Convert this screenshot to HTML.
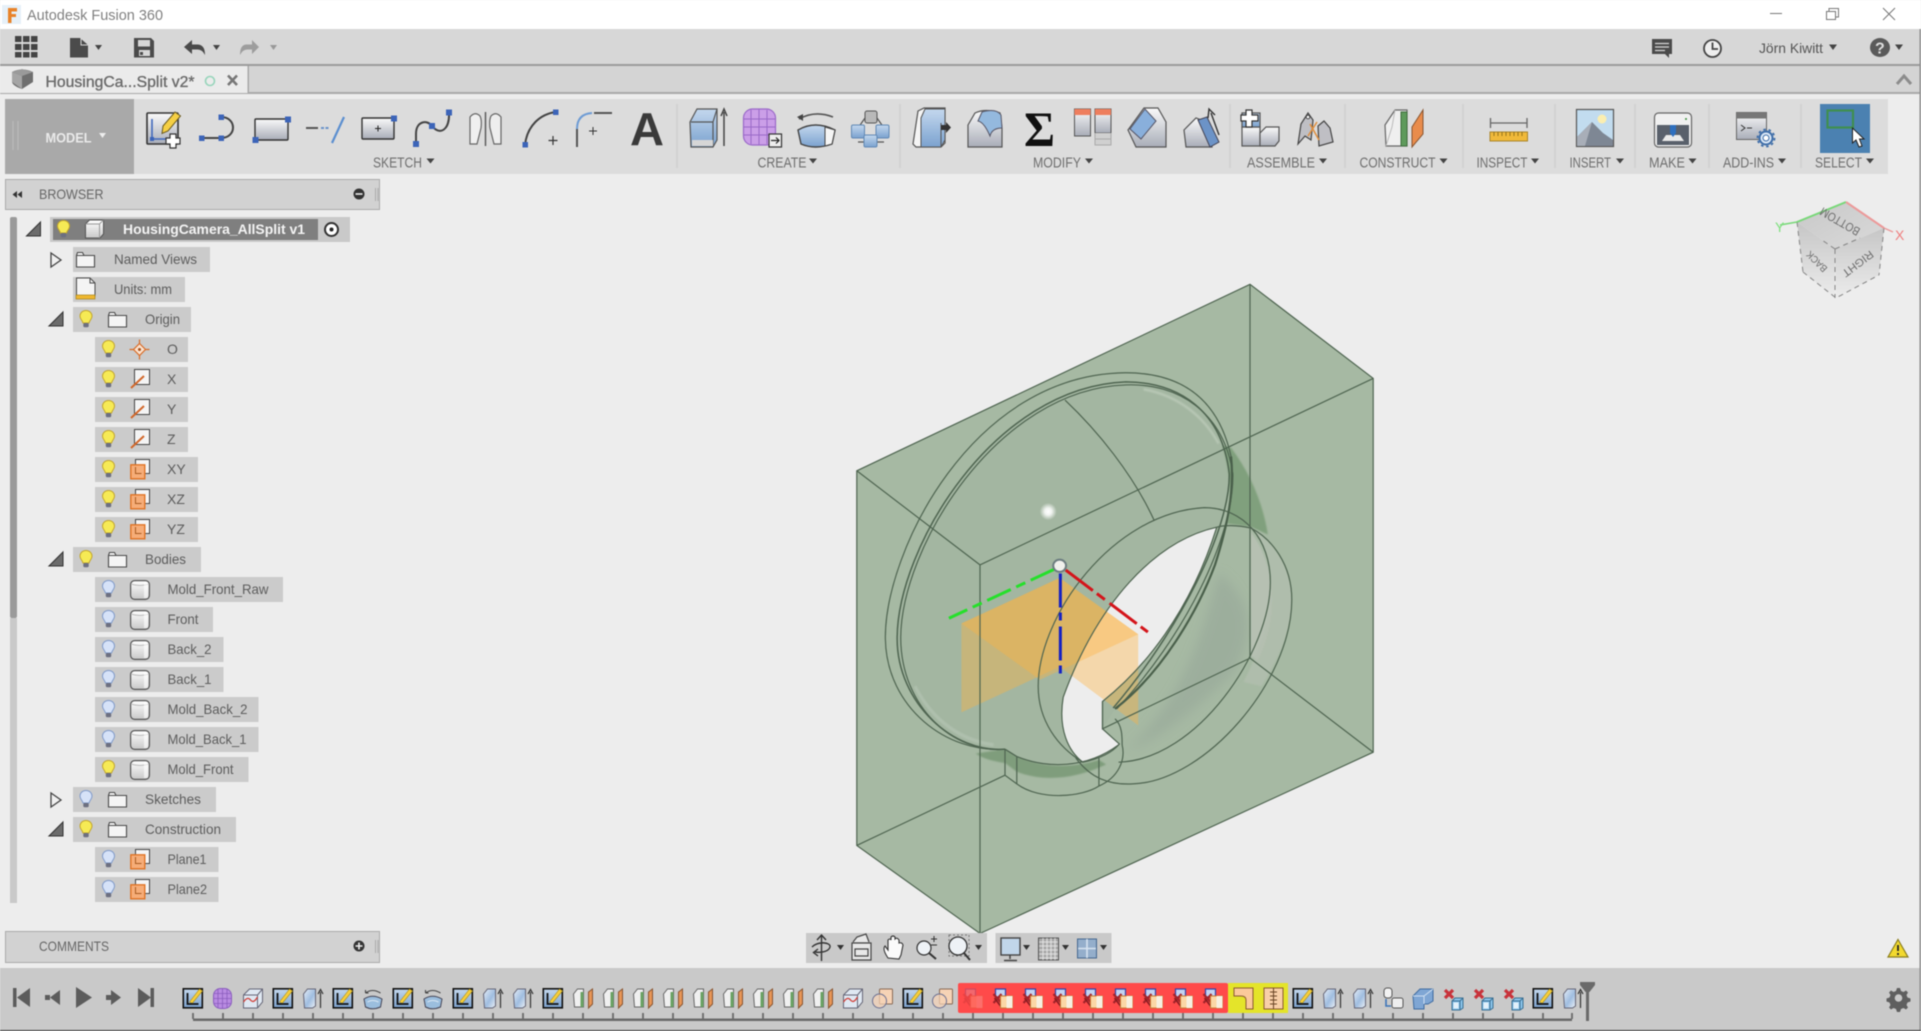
<!DOCTYPE html>
<html><head><meta charset="utf-8"><title>Autodesk Fusion 360</title>
<style>html,body{margin:0;padding:0;background:#ededed;overflow:hidden}svg{display:block;filter:blur(.5px)}text{font-family:"Liberation Sans",sans-serif}</style></head>
<body>
<svg xmlns="http://www.w3.org/2000/svg" width="1921" height="1031" viewBox="0 0 1921 1031">
<defs>
<linearGradient id="gw" x1="0" y1="0" x2="0" y2="1"><stop offset="0" stop-color="#fafafa"/><stop offset="1" stop-color="#a9adb8"/></linearGradient>
<linearGradient id="gb" x1="0" y1="0" x2="0" y2="1"><stop offset="0" stop-color="#c4d8ee"/><stop offset="1" stop-color="#7ba2cf"/></linearGradient>
<linearGradient id="gs" x1="0" y1="0" x2="1" y2="1"><stop offset="0" stop-color="#e8eff8"/><stop offset=".55" stop-color="#9fbde0"/><stop offset="1" stop-color="#edf1f6"/></linearGradient>
<linearGradient id="gy" x1="0" y1="0" x2="0" y2="1"><stop offset="0" stop-color="#ffffff"/><stop offset="1" stop-color="#c8c8c8"/></linearGradient>
<linearGradient id="gc" x1="0" y1="0" x2="1" y2="1"><stop offset="0" stop-color="#c8c8c8"/><stop offset="1" stop-color="#dadada"/></linearGradient>
<linearGradient id="gd" x1="0" y1="0" x2="0" y2="1"><stop offset="0" stop-color="#c6c6c6"/><stop offset="1" stop-color="#ececec"/></linearGradient>
<radialGradient id="spot"><stop offset="0" stop-color="#fff"/><stop offset=".4" stop-color="#fff" stop-opacity=".85"/><stop offset="1" stop-color="#fff" stop-opacity="0"/></radialGradient>
<filter id="b2" x="-20%" y="-20%" width="140%" height="140%"><feGaussianBlur stdDeviation="2"/></filter>
<filter id="b8" x="-40%" y="-40%" width="180%" height="180%"><feGaussianBlur stdDeviation="14"/></filter>

<g id="by"><path d="M6.5 .5C3 .5 .5 3 .5 6.300c0 2.700 2.200 3.800 3 6.700h6c.8-2.900 3-4 3-6.700C12.500 3 10 .5 6.500 .5z" fill="#f6ea55" stroke="#c2a52c"/><rect x="3.800" y="13" width="5.400" height="4.200" rx="1.200" fill="#6c6f80"/></g>
<g id="bb"><path d="M6.500 .5C3 .5 .5 3 .5 6.300c0 2.700 2.200 3.800 3 6.700h6c.8-2.900 3-4 3-6.700C12.500 3 10 .5 6.500 .5z" fill="#d6e2f8" stroke="#7f9aca"/><rect x="3.800" y="13" width="5.400" height="4.200" rx="1.200" fill="#6c6f80"/></g>
<path id="fo" d="M.5 3.500V15h18V3.500H8L6.500 .5H1.500z M.5 3.500H8" fill="#f4f4f4" stroke="#4a4a4a" stroke-width="1.100"/>
<g id="bd"><rect x=".6" y=".6" width="18.800" height="18.800" rx="4" fill="url(#gy)" stroke="#555" stroke-width="1.200"/><path d="M1 4Q10 7 19 4" fill="none" stroke="#bbb"/><rect x="14" y="2" width="4" height="16" fill="#fff" opacity=".6"/></g>
<g id="ax"><rect x="4.500" y=".5" width="15" height="15" fill="#f4f4f4" stroke="#444"/><path d="M1 19L14 7" stroke="#d2672a" stroke-width="2"/></g>
<g id="pl"><rect x="5.500" y=".5" width="14" height="14" fill="#f4f4f4" stroke="#444"/><rect x=".8" y="5.800" width="14" height="14" fill="#f6ad78" stroke="#e0701f" stroke-width="1.300"/><path d="M5.500 8v6.500h6" fill="none" stroke="#a75a20"/></g>
<path id="tE" d="M0 14L14 0V14z" fill="#6c6c6c" stroke="#333"/>
<path id="tC" d="M1 1L11 8 1 15z" fill="#f0f0f0" stroke="#444" stroke-width="1.300"/>

<g id="tsk"><rect x=".8" y=".8" width="19" height="19" fill="url(#gb)" stroke="#111" stroke-width="1.600"/><path d="M5 5V16H16" fill="none" stroke="#111" stroke-width="1.800"/><path d="M7 14L17 1l3 2L10 15z" fill="#f7cf3c" stroke="#a58a1a" stroke-width=".6"/></g>
<g id="tpu"><rect x="1" y=".5" width="18" height="20" rx="7" fill="#b98be2" stroke="#8a5dbd"/><path d="M1 5.500H19M1 10.500H19M1 15.500H19M5.500 1V20M10 .5V20.500M14.500 1V20" stroke="#8a5dbd" stroke-width=".8"/></g>
<g id="tde"><path d="M1 7L7 1H20V14L15 20H1z" fill="#dfe8f2" stroke="#667"/><path d="M1 7H15V20M15 7L20 1" fill="none" stroke="#667"/><path d="M1 14Q5 8 8 12T15 9" fill="none" stroke="#d2443d" stroke-width="1.300"/></g>
<g id="tex"><path d="M1 6L5 1H13V18L10 20H2z" fill="url(#gs)" stroke="#667"/><path d="M18 20V4M15.500 6L18 1.500 20.500 6" fill="none" stroke="#333" stroke-width="1.200"/></g>
<g id="trv"><path d="M3 5Q10 0 18 5M3 5V2M3 5H6" fill="none" stroke="#444" stroke-width="1.100"/><path d="M1.500 11Q10 5.500 19.500 11L18 19Q10 22.500 3 19z" fill="#9bbede" stroke="#445"/><path d="M5 14Q10 11 16 14" fill="none" stroke="#dbe7f3"/></g>
<g id="tco"><path d="M1 6L5 1H11V19H2z" fill="#f0f0f0" stroke="#666"/><path d="M8 4H11V19H8z" fill="#6aa264"/><path d="M16 4L20 1V16L16 20z" fill="#e89555" stroke="#8a5530"/></g>
<g id="tin"><rect x="7" y="1" width="13" height="15" rx="1" fill="#f6d3b6" stroke="#8a6b55"/><circle cx="7" cy="13" r="7" fill="#f6d3b6" fill-opacity=".7" stroke="#6a6f92"/></g>
<g id="tmv"><path d="M3 1H13V9H3z" fill="#c5d3f0" stroke="#3444a8" stroke-width="1.200"/><path d="M1 6L9 15M9 6L1 15" stroke="#a3232a" stroke-width="2.200"/><path d="M2 10L8 18" stroke="#8a1c22" stroke-width="1.600"/><rect x="8" y="8" width="12" height="12" fill="#fbd7a6" stroke="#c77c36"/><rect x="14" y="8" width="6" height="12" fill="#f7f0e2"/></g>
<g id="txb"><path d="M3 2L11 10M11 2L3 10" stroke="#c8323a" stroke-width="3.200"/><path d="M10 13l3-3h8v10l-3 2h-8z" fill="#8bc4ea" stroke="#3a6f93"/><path d="M10 13h8v9M18 13l3-3" fill="none" stroke="#3a6f93"/><rect x="11.500" y="14.500" width="5" height="6" fill="#e2f1fb"/></g>
</defs>

<!-- base -->
<rect width="1921" height="1031" fill="#ededed"/>
<rect x="0" y="0" width="1921" height="29" fill="#fff"/>
<rect x="0" y="29" width="1921" height="35" fill="#d7d7d7"/>
<rect x="0" y="64" width="1921" height="2.500" fill="#9b9b9b"/>
<rect x="0" y="66" width="1921" height="27" fill="#d4d4d4"/>
<rect x="0" y="92" width="1921" height="2" fill="#a9a9a9"/>
<rect x="0" y="66" width="248" height="27" fill="#ebebeb"/>
<rect x="247.500" y="66" width="1.500" height="27" fill="#a9a9a9"/>
<rect x="1919.500" y="29" width="1.500" height="1002" fill="#8c8c8c"/>

<!-- title bar -->
<rect x="2" y="5" width="19" height="19" fill="#e6f0f8"/>
<path d="M8 8H17V11.500H11.500V14H16V17H11.500V23H8z" fill="#e8832a"/>
<text x="27" y="20" font-size="15" fill="#808080" textLength="136" lengthAdjust="spacingAndGlyphs">Autodesk Fusion 360</text>
<path d="M1770 13.500H1782" stroke="#777" stroke-width="1"/>
<path d="M1826.500 11.500H1835.500V19.500H1826.500zM1829 11.500V8.500H1838.500V17H1835.500" fill="none" stroke="#777"/>
<path d="M1883 8L1895 20M1895 8L1883 20" stroke="#777"/>

<!-- top toolbar -->
<g fill="#444"><rect x="15" y="36" width="6.500" height="6"/><rect x="23" y="36" width="6.500" height="6"/><rect x="31" y="36" width="6.500" height="6"/><rect x="15" y="44" width="6.500" height="6"/><rect x="23" y="44" width="6.500" height="6"/><rect x="31" y="44" width="6.500" height="6"/><rect x="15" y="52" width="6.500" height="5.500"/><rect x="23" y="52" width="6.500" height="5.500"/><rect x="31" y="52" width="6.500" height="5.500"/></g>
<path d="M70 38H80L88 45V57.500H70z" fill="#4b4b4b"/><path d="M81 38V45H88" fill="none" stroke="#d7d7d7"/>
<path d="M95 45H102L98.500 50z" fill="#444"/>
<path d="M134 38H151L154 41V57.500H134z" fill="#4b4b4b"/><rect x="138" y="40" width="12" height="6.500" fill="#d7d7d7"/><rect x="139" y="50" width="11" height="6" fill="#d7d7d7"/><rect x="140" y="52" width="3" height="3" fill="#4b4b4b"/>
<path d="M192 40V44.500H198Q205 45 205 55Q202 49 197 49.500H192V54L184 47z" fill="#4a4a4a"/>
<path d="M213 45H220L216.500 50z" fill="#444"/>
<path d="M252 40V44.500H246Q240 45 240 55Q243 49 248 49.500H252V54L259 47z" fill="#9d9d9d"/>
<path d="M270 45H277L273.500 50z" fill="#999"/>
<path d="M1652 39H1672V54H1669V58L1665 54H1652z" fill="#4a4a4a"/><path d="M1655 43.500H1669M1655 47H1669M1655 50.500H1665" stroke="#d7d7d7" stroke-width="1.200"/>
<circle cx="1712.500" cy="48.500" r="8.500" fill="#eee" stroke="#444" stroke-width="1.800"/><path d="M1712.500 42.500V49H1718" fill="none" stroke="#444" stroke-width="1.800"/>
<text x="1759" y="53" font-size="14" fill="#555" textLength="64" lengthAdjust="spacingAndGlyphs">Jörn Kiwitt</text>
<path d="M1829 44.500H1837L1833 50z" fill="#444"/>
<ellipse cx="1880" cy="47.500" rx="10" ry="9.500" fill="#5a5a5a"/>
<text x="1875" y="53.500" font-size="16" font-weight="bold" fill="#ddd">?</text>
<path d="M1895 44.500H1903L1899 50z" fill="#444"/>

<!-- tab -->
<path d="M12 72Q22 67 33 72V82L22 89Q13 86 12 82z" fill="#6f6f6f"/><path d="M12 72L22 76 33 72 22 69z" fill="#9a9a9a"/><path d="M22 76V89L12 82V72z" fill="#a5a5a5"/>
<text x="45.500" y="87" font-size="15.500" fill="#6b6b6b" stroke="#6b6b6b" stroke-width=".35" textLength="149" lengthAdjust="spacingAndGlyphs">HousingCa...Split v2*</text>
<circle cx="210" cy="81" r="4.500" fill="none" stroke="#97d5bb" stroke-width="1.600"/>
<path d="M228 75.500L237 85M237 75.500L228 85" stroke="#777" stroke-width="2.600"/>
<path d="M1897 84L1904 76 1911 84" fill="none" stroke="#8c8c8c" stroke-width="3"/>

<!-- ribbon -->
<rect x="5" y="99" width="1883" height="75" fill="#dcdcdc"/>
<rect x="5" y="99" width="129" height="75" fill="#a9a9a9"/>
<path d="M13 121V150M18 121V150" stroke="#bdbdbd"/>
<text x="45.500" y="142.500" font-size="14" font-weight="bold" fill="#eaeaea" textLength="46" lengthAdjust="spacingAndGlyphs">MODEL</text>
<path d="M99 133H106L102.500 138z" fill="#eee"/>
<g stroke="#cfcfcf" stroke-width="1.500"><path d="M677 104V168M900 104V168M1230 104V168M1345 104V168M1463 104V168M1555 104V168M1635 104V168M1709 104V168M1801 104V168"/></g>

<g font-size="15" fill="#6e6e6e">
<text x="373" y="167.500" textLength="49" lengthAdjust="spacingAndGlyphs">SKETCH</text>
<text x="757.500" y="167.500" textLength="49" lengthAdjust="spacingAndGlyphs">CREATE</text>
<text x="1033" y="167.500" textLength="48" lengthAdjust="spacingAndGlyphs">MODIFY</text>
<text x="1247" y="167.500" textLength="68" lengthAdjust="spacingAndGlyphs">ASSEMBLE</text>
<text x="1359.500" y="167.500" textLength="76" lengthAdjust="spacingAndGlyphs">CONSTRUCT</text>
<text x="1476.500" y="167.500" textLength="51" lengthAdjust="spacingAndGlyphs">INSPECT</text>
<text x="1569.500" y="167.500" textLength="41.500" lengthAdjust="spacingAndGlyphs">INSERT</text>
<text x="1649" y="167.500" textLength="36" lengthAdjust="spacingAndGlyphs">MAKE</text>
<text x="1723" y="167.500" textLength="51" lengthAdjust="spacingAndGlyphs">ADD-INS</text>
<text x="1815" y="167.500" textLength="47" lengthAdjust="spacingAndGlyphs">SELECT</text>
</g>
<g fill="#444"><path d="M426.500 158.500H434.500L430.500 163.500zM809 158.500H817L813 163.500zM1085 158.500H1093L1089 163.500zM1319 158.500H1327L1323 163.500zM1439.500 158.500H1447.500L1443.500 163.500zM1531 158.500H1539L1535 163.500zM1616 158.500H1624L1620 163.500zM1688.500 158.500H1696.500L1692.500 163.500zM1778 158.500H1786L1782 163.500zM1866 158.500H1874L1870 163.500z"/></g>

<!-- sketch icons -->
<rect x="147" y="113" width="31" height="31" rx="1" fill="url(#gw)" stroke="#333" stroke-width="1.600"/>
<path d="M152 119V139H166" fill="none" stroke="#4169bd" stroke-width="1.600"/><rect x="150" y="137" width="4" height="4" fill="#3c64b8"/>
<path d="M163 126L175 112l5.500 4L168 131l-6 2.500z" fill="#f5cf44" stroke="#6a5a20"/>
<path d="M170 134h6v4h4v6h-4v4h-6v-4h-4v-6h4z" fill="#fff" stroke="#333" stroke-width="1.200"/>
<path d="M202 138H221C237 138 237 117 221 117" fill="none" stroke="#444" stroke-width="2"/>
<g fill="#3c64b8"><rect x="199" y="135.500" width="5.500" height="5.500"/><rect x="218.500" y="135.500" width="5.500" height="5.500"/><rect x="218.500" y="114.500" width="5.500" height="5.500"/></g>
<rect x="255" y="119" width="33" height="21" rx="1" fill="url(#gw)" stroke="#333" stroke-width="1.400"/>
<g fill="#3c64b8"><rect x="252.500" y="137" width="6" height="6"/><rect x="285" y="116.500" width="6" height="6"/></g>
<path d="M306 128H318" stroke="#555" stroke-width="2"/><path d="M321 128H329" stroke="#6b93c8" stroke-width="2" stroke-dasharray="3 1.500"/><path d="M332 143L344 117" stroke="#5b8fd0" stroke-width="2.200"/>
<rect x="362" y="118" width="32" height="21" rx="1" fill="url(#gw)" stroke="#333" stroke-width="1.400"/>
<path d="M375 128.500h6M378 125.500v6" stroke="#222"/><rect x="391" y="115.500" width="6" height="6" fill="#3c64b8"/>
<path d="M416 144V134C416 120 428 120 432 126C440 136 450 130 449 112" fill="none" stroke="#444" stroke-width="2"/>
<g fill="#3c64b8"><rect x="413" y="141" width="6" height="6"/><rect x="429" y="123" width="6" height="6"/><rect x="446" y="109.500" width="6" height="6"/></g>
<path d="M470 117Q475 111 480 116Q482 120 481 128L477 144H470z" fill="#f0f0f0" stroke="#666" stroke-width="1.200"/>
<path d="M485.500 112V146" stroke="#555" stroke-width="1.400"/>
<path d="M501 117Q496 111 491 116Q489 120 490 128L494 144H501z" fill="#eee" stroke="#666" stroke-width="1.200"/>
<path d="M525 145C527 126 540 114 556 112" fill="none" stroke="#444" stroke-width="2"/>
<g fill="#3c64b8"><rect x="522.500" y="142" width="5.500" height="5.500"/><rect x="553" y="109.500" width="5.500" height="5.500"/></g>
<path d="M553 136v9M548.500 140.500h9" stroke="#333" stroke-width="1.200"/>
<path d="M577 147V129" stroke="#555" stroke-width="2"/><path d="M577 129Q577 114 592 113" fill="none" stroke="#6d9bd4" stroke-width="2"/><path d="M594 113H612" stroke="#555" stroke-width="2"/><path d="M593 127v8M589 131h8" stroke="#333"/>
<text x="630" y="145" font-size="46" font-weight="bold" fill="#3a3a3a" textLength="34" lengthAdjust="spacingAndGlyphs">A</text>

<!-- create icons -->
<path d="M690 122L697 109H717V140L713 147H691z" fill="url(#gb)" stroke="#555" stroke-width="1.200"/><path d="M691 122H713V147M713 122L717 109" fill="none" stroke="#555" stroke-width="1.200"/><path d="M692 140H713V146H692z" fill="#d6d6d6"/>
<path d="M724 146V112M721 116L724 109 727 116" fill="none" stroke="#444" stroke-width="1.500"/>
<rect x="743.500" y="109" width="32" height="36" rx="9" fill="#cb9fe8" stroke="#9a69c8" stroke-width="1.200"/>
<path d="M744 119H775M744 127H775M744 135H775M751 110V144M759 109V145M767 110V144" stroke="#9a69c8" stroke-width="1"/>
<rect x="769" y="134" width="12.500" height="13" fill="#eee" stroke="#333" stroke-width="1.200"/><path d="M771 140.500H779M776 137.500L779 140.500 776 143.500" fill="none" stroke="#222" stroke-width="1.200"/>
<path d="M799 119Q815 110 833 117" fill="none" stroke="#555" stroke-width="1.600"/><path d="M797 117L803 114 803 121z" fill="#444"/>
<path d="M798 130Q815 120 835 130L832 144Q815 150 801 144z" fill="url(#gb)" stroke="#444" stroke-width="1.400"/><path d="M825 127L835 130 832 144 825 146z" fill="#f5f5f5" stroke="#444"/>
<rect x="865" y="111" width="12" height="12" rx="2" fill="#b9b9b9" stroke="#555"/>
<path d="M858 128L865 118M884 128L877 118M858 142L865 142M884 142L877 142" stroke="#555" stroke-width="1.200"/>
<rect x="851.500" y="125" width="13" height="13" rx="1.500" fill="url(#gb)" stroke="#6088b4"/>
<rect x="876" y="125" width="13" height="13" rx="1.500" fill="url(#gb)" stroke="#6088b4"/>
<rect x="864" y="135" width="13" height="12" rx="1.500" fill="url(#gb)" stroke="#6088b4"/>

<!-- modify icons -->
<path d="M913 144L918 111 924 108H945V143L941 147H916z" fill="#f4f4f4" stroke="#555" stroke-width="1.200"/><path d="M921 118L925 109H945V140L941 147H921z" fill="url(#gb)" stroke="#555"/><path d="M941 123V147" stroke="#555"/>
<path d="M941 125H946V122L951 127.500 946 133V130H941z" fill="#333"/>
<path d="M968 125L975 113Q985 108 1000 113L1002 128V147H968z" fill="url(#gw)" stroke="#555" stroke-width="1.200"/><path d="M982 112Q996 108 1001 115L1002 128Q992 128 990 136 984 122 978 121z" fill="#94b9de" stroke="#556"/>
<text x="1024" y="146" font-size="50" font-weight="bold" fill="#111" textLength="31" lengthAdjust="spacingAndGlyphs" style="font-family:'Liberation Serif',serif">Σ</text>
<rect x="1074.500" y="109" width="16" height="27" fill="url(#gw)" stroke="#555"/><rect x="1074.500" y="109" width="16" height="6" fill="#ee7e5e"/>
<rect x="1095" y="109" width="16" height="24" fill="url(#gw)" stroke="#555"/><rect x="1095" y="109" width="16" height="6" fill="#ee7e5e"/>
<path d="M1095 133v12h16v-12M1095 139H1111" fill="#d0d0d0" stroke="#aaa"/>
<path d="M1128 130L1144 108H1158L1166 122V147H1136z" fill="url(#gw)" stroke="#555" stroke-width="1.200"/><path d="M1130 129L1145 109 1156 121 1141 139z" fill="#89afdb" stroke="#556"/>
<path d="M1184 130L1196 118 1206 122 1212 147H1186z" fill="url(#gw)" stroke="#555" stroke-width="1.200"/><path d="M1198 120L1207 117 1219 142 1210 147z" fill="#6c93c7" stroke="#445"/>
<path d="M1219 135L1211 113M1208 118L1209 109 1215 115" fill="none" stroke="#333" stroke-width="1.400"/>

<!-- assemble -->
<rect x="1242" y="127" width="18" height="19" fill="url(#gw)" stroke="#555" stroke-width="1.200"/>
<path d="M1260 133L1266 127H1279V141L1275 146H1260z" fill="url(#gw)" stroke="#555" stroke-width="1.200"/>
<path d="M1242 113H1260V127H1242z" fill="url(#gb)" stroke="#555" stroke-width="1.200"/>
<path d="M1246 110h6v5h6v6h-6v6h-6v-6h-5v-6h5z" fill="#fff" stroke="#333" stroke-width="1.200"/>
<path d="M1298 144L1301 124 1308 113 1313 120 1311 140 1305 136z" fill="#bfbfc4" stroke="#444" stroke-width="1.200"/><path d="M1333 142L1330 128 1324 121 1318 126 1319 146z" fill="#bfbfc4" stroke="#444" stroke-width="1.200"/>
<path d="M1310 124L1319 140M1317 122L1308 136" stroke="#e08f3e" stroke-width="1.500"/><circle cx="1308" cy="117" r="1.800" fill="#fff" stroke="#444"/>

<!-- construct -->
<path d="M1385 125L1395 110H1407V146H1386z" fill="#efefef" stroke="#666" stroke-width="1.200"/><path d="M1401 112H1407V146H1401z" fill="#5e9a5b" stroke="#3f6e3d"/><path d="M1395 110L1392 127 1386 146" fill="none" stroke="#bbb"/>
<path d="M1412 127L1423 110V134L1412 147z" fill="#e98c4c" stroke="#8a5530"/>

<!-- inspect -->
<path d="M1490.500 118V128M1527 118V128M1490.500 123H1527" fill="none" stroke="#666" stroke-width="1.300"/>
<rect x="1490" y="132" width="37.500" height="9" fill="#f0b93a" stroke="#a9852b"/><path d="M1494 132v4M1498 132v4M1502 132v4M1506 132v4M1510 132v4M1514 132v4M1518 132v4M1522 132v4" stroke="#7f6416" stroke-width=".8"/>

<!-- insert -->
<rect x="1576.500" y="109.500" width="37" height="37" fill="#c2dcef" stroke="#555" stroke-width="1.200"/><circle cx="1602" cy="119" r="4.500" fill="#fbeeb0"/>
<path d="M1577 146V137L1592 122 1603 133 1613 140V146z" fill="#7e8794"/><path d="M1592 122L1585 146H1577V137z" fill="#a8aeb8"/>

<!-- make -->
<rect x="1654.500" y="113" width="37" height="34" rx="4" fill="#f0f0f0" stroke="#666" stroke-width="1.200"/><rect x="1657" y="125" width="32" height="20" fill="#59606b"/>
<path d="M1662 141H1684L1680 135H1666z" fill="#e9e9e9"/><path d="M1670 125H1676V133L1673 137 1670 133z" fill="#2e6fbe"/><circle cx="1686" cy="119" r="1" fill="#3a8e3a"/>

<!-- add-ins -->
<rect x="1736.500" y="112.500" width="30" height="27" fill="url(#gw)" stroke="#666"/><rect x="1736.500" y="112.500" width="30" height="6" fill="#777"/>
<path d="M1741 125L1745 128 1741 131M1747 128H1752" fill="none" stroke="#333"/>
<circle cx="1766" cy="138" r="6.500" fill="#dce9f7" stroke="#3e6da8" stroke-width="2"/><circle cx="1766" cy="138" r="3" fill="#fff" stroke="#3e6da8"/><circle cx="1766" cy="138" r="8.500" fill="none" stroke="#3e6da8" stroke-width="1.800" stroke-dasharray="2.500 2.800"/>

<!-- select -->
<rect x="1820" y="104" width="50" height="49" fill="#4b81b1"/>
<rect x="1827.500" y="110.500" width="25.500" height="17" fill="none" stroke="#3f8f4f" stroke-width="2.200"/>
<path d="M1852.500 128V143L1856 140 1859 147 1862 146 1859.500 139H1864z" fill="#fff" stroke="#222"/>

<!-- browser panel -->
<rect x="5.500" y="179.500" width="374" height="30" fill="#d2d2d2" stroke="#aaa"/>
<path d="M22 191L17.500 194.500 22 198zM17 191L12.500 194.500 17 198z" fill="#333"/>
<text x="39" y="199" font-size="14" fill="#666" textLength="64.500" lengthAdjust="spacingAndGlyphs">BROWSER</text>
<circle cx="359" cy="194" r="5.500" fill="#333"/><path d="M355.500 194H362.500" stroke="#eee" stroke-width="1.600"/>
<path d="M375.500 188V201M378 188V201" stroke="#aaa"/>

<!-- scrollbar -->
<rect x="10" y="217" width="7" height="401" rx="2" fill="#9a9a9a"/><rect x="10" y="618" width="7" height="285" fill="#c9c9c9"/>

<!-- tree -->
<rect x="50" y="217" width="300" height="25" fill="#c9c9c9"/><rect x="53" y="219" width="265" height="21" fill="#7f7f7f"/>
<use href="#tE" x="26.500" y="222"/>
<use href="#by" x="57" y="220"/>
<path d="M85.500 224L89.500 220H103.500V234L100 238H85.500z" fill="url(#gy)" stroke="#555"/><path d="M85.500 224H99.500L103.500 220M99.500 224V238" fill="none" stroke="#999"/>
<text x="123" y="234" font-size="14" font-weight="bold" fill="#f4f4f4" textLength="182" lengthAdjust="spacingAndGlyphs">HousingCamera_AllSplit v1</text>
<circle cx="331.500" cy="229.500" r="6.500" fill="#fff" stroke="#333" stroke-width="2"/><circle cx="331.500" cy="229.500" r="2" fill="#222"/>

<g fill="#cbcbcb">
<rect x="73" y="247" width="137" height="25"/><rect x="73" y="277" width="112" height="25"/><rect x="73" y="307" width="118" height="25"/>
<rect x="95" y="337" width="93" height="25"/><rect x="95" y="367" width="93" height="25"/><rect x="95" y="397" width="93" height="25"/><rect x="95" y="427" width="93" height="25"/>
<rect x="95" y="457" width="103" height="25"/><rect x="95" y="487" width="103" height="25"/><rect x="95" y="517" width="103" height="25"/>
<rect x="73" y="547" width="128" height="25"/><rect x="95" y="577" width="188" height="25"/><rect x="95" y="607" width="118" height="25"/>
<rect x="95" y="637" width="128.500" height="25"/><rect x="95" y="667" width="128.500" height="25"/><rect x="95" y="697" width="163.500" height="25"/><rect x="95" y="727" width="163.500" height="25"/><rect x="95" y="757" width="153.500" height="25"/>
<rect x="73" y="787" width="143" height="25"/><rect x="73" y="817" width="163" height="25"/><rect x="95" y="847" width="123.500" height="25"/><rect x="95" y="877" width="123.500" height="25"/>
</g>

<use href="#tC" x="50" y="252"/><use href="#fo" x="76" y="252"/>
<path d="M76.500 278V296H95V283L90 278z" fill="#f4f4f4" stroke="#4a4a4a"/><path d="M90 278V283H95" fill="none" stroke="#4a4a4a"/><rect x="76" y="295" width="19" height="4" fill="#efb72e" stroke="#a6841f" stroke-width=".7"/>
<use href="#tE" x="49" y="312"/><use href="#by" x="79.500" y="310"/><use href="#fo" x="108" y="312"/>

<use href="#by" x="102" y="340"/><use href="#by" x="102" y="370"/><use href="#by" x="102" y="400"/><use href="#by" x="102" y="430"/><use href="#by" x="102" y="460"/><use href="#by" x="102" y="490"/><use href="#by" x="102" y="520"/>
<path d="M139.500 343.500L145.500 349.500 139.500 355.500 133.500 349.500z" fill="#fbe3cf" stroke="#d96c27" stroke-width="1.200"/><path d="M139.500 339.500V343.500M139.500 355.500V359.500M129.500 349.500H133.500M145.500 349.500H149.500" stroke="#d96c27" stroke-width="1.200"/><circle cx="139.500" cy="349.500" r="1.500" fill="#a8501c"/>
<use href="#ax" x="130" y="369"/><use href="#ax" x="130" y="399"/><use href="#ax" x="130" y="429"/>
<use href="#pl" x="130" y="459"/><use href="#pl" x="130" y="489"/><use href="#pl" x="130" y="519"/>

<use href="#tE" x="49" y="552"/><use href="#by" x="79.500" y="550"/><use href="#fo" x="108" y="552"/>
<use href="#bb" x="102" y="580"/><use href="#bb" x="102" y="610"/><use href="#bb" x="102" y="640"/><use href="#bb" x="102" y="670"/><use href="#bb" x="102" y="700"/><use href="#bb" x="102" y="730"/><use href="#by" x="102" y="760"/>
<use href="#bd" x="130" y="580"/><use href="#bd" x="130" y="610"/><use href="#bd" x="130" y="640"/><use href="#bd" x="130" y="670"/><use href="#bd" x="130" y="700"/><use href="#bd" x="130" y="730"/><use href="#bd" x="130" y="760"/>
<use href="#tC" x="50" y="792"/><use href="#bb" x="79.500" y="790"/><use href="#fo" x="108" y="792"/>
<use href="#tE" x="49" y="822"/><use href="#by" x="79.500" y="820"/><use href="#fo" x="108" y="822"/>
<use href="#bb" x="102" y="850"/><use href="#bb" x="102" y="880"/><use href="#pl" x="130" y="849"/><use href="#pl" x="130" y="879"/>

<g font-size="14" fill="#5d5d5d">
<text x="114" y="264" textLength="83" lengthAdjust="spacingAndGlyphs">Named Views</text>
<text x="114" y="294" textLength="58" lengthAdjust="spacingAndGlyphs">Units: mm</text>
<text x="145" y="324" textLength="35" lengthAdjust="spacingAndGlyphs">Origin</text>
<text x="167" y="354">O</text><text x="167" y="384">X</text><text x="167" y="414">Y</text><text x="167" y="444">Z</text>
<text x="167" y="474">XY</text><text x="167" y="504">XZ</text><text x="167" y="534">YZ</text>
<text x="145" y="564" textLength="41" lengthAdjust="spacingAndGlyphs">Bodies</text>
<text x="167.500" y="594" textLength="101" lengthAdjust="spacingAndGlyphs">Mold_Front_Raw</text>
<text x="167.500" y="624" textLength="31" lengthAdjust="spacingAndGlyphs">Front</text>
<text x="167.500" y="654" textLength="44" lengthAdjust="spacingAndGlyphs">Back_2</text>
<text x="167.500" y="684" textLength="44" lengthAdjust="spacingAndGlyphs">Back_1</text>
<text x="167.500" y="714" textLength="80" lengthAdjust="spacingAndGlyphs">Mold_Back_2</text>
<text x="167.500" y="744" textLength="79" lengthAdjust="spacingAndGlyphs">Mold_Back_1</text>
<text x="167.500" y="774" textLength="66" lengthAdjust="spacingAndGlyphs">Mold_Front</text>
<text x="145" y="804" textLength="56" lengthAdjust="spacingAndGlyphs">Sketches</text>
<text x="145" y="834" textLength="76" lengthAdjust="spacingAndGlyphs">Construction</text>
<text x="167.500" y="864" textLength="39" lengthAdjust="spacingAndGlyphs">Plane1</text>
<text x="167.500" y="894" textLength="39.500" lengthAdjust="spacingAndGlyphs">Plane2</text>
</g>

<!-- comments -->
<rect x="5.500" y="931.500" width="374" height="31" fill="#d2d2d2" stroke="#aaa"/>
<text x="39" y="951" font-size="14" fill="#666" textLength="70" lengthAdjust="spacingAndGlyphs">COMMENTS</text>
<circle cx="359" cy="946" r="5.500" fill="#333"/><path d="M355.500 946H362.500M359 942.500V949.500" stroke="#eee" stroke-width="1.600"/>
<path d="M375.500 940V953M378 940V953" stroke="#aaa"/>

<!-- 3D model -->
<g transform="translate(840 270) scale(.35714 .43365)">
<path d="M47 463L1148 33 1493 250V1112L392 1530 47 1327z" fill="#a6b9a3"/>
<!-- hemisphere tone -->
<path d="M160 850C160 640 430 270 800 262C950 260 1075 330 1090 470C1095 600 960 830 770 1012L735 1058 780 1095C680 1140 580 1150 495 1122L462 1105C320 1115 160 1000 160 850z" fill="#a3b6a1"/>
<path d="M850 275C950 290 1020 340 1060 400" fill="none" stroke="#c9d6c6" stroke-width="6" opacity=".55" filter="url(#b2)"/>
<path d="M210 960C260 1040 340 1085 430 1095" fill="none" stroke="#bccabb" stroke-width="8" opacity=".5" filter="url(#b2)"/>
<path d="M1070 405L1095 410C1150 470 1185 540 1198 610L1150 592 1085 585C1098 530 1092 460 1070 405z" fill="#80a07d" filter="url(#b2)"/>
<path d="M380 1115L462 1105 495 1122C580 1150 650 1148 725 1130L745 1140C650 1178 560 1178 495 1157L462 1137C430 1133 400 1127 380 1115z" fill="#7f9d7c" filter="url(#b2)"/>
<path d="M1060 700C1160 760 1160 850 1100 930 1000 1010 900 1080 800 1110 950 1000 1010 860 1060 700z" fill="#95a698" opacity=".55" filter="url(#b8)"/>
<path d="M1155 610C1220 680 1230 800 1170 900L1150 890V600z" fill="#b6c0b2" filter="url(#b2)"/>
<path d="M1205 720C1205 800 1180 870 1130 950L1180 960C1240 880 1265 820 1265 760 1265 700 1230 640 1160 600 1190 640 1205 680 1205 720z" fill="#b4bfb0" opacity=".7" filter="url(#b2)"/>
<!-- hole -->
<path d="M1055 593C880 625 720 770 625 985C610 1060 640 1110 680 1135C720 1128 760 1115 782 1093L735 1058V995C850 920 980 790 1055 593z" fill="#ededed"/>
<!-- origin planes -->
<g fill="#ffb340">
<path d="M340 815L615 710V915L340 1020z" opacity=".38"/>
<path d="M615 710L835 840V1050L615 915z" opacity=".38"/>
<path d="M340 815L615 710 835 840 560 945z" opacity=".38"/>
</g>
<!-- lines -->
<g fill="none" stroke="#4f6551" stroke-width="1.200">
<path vector-effect="non-scaling-stroke" d="M47 463L1148 33 1493 250V1112L392 1530 47 1327z"/>
<path vector-effect="non-scaling-stroke" d="M47 463L392 680 1493 250M392 680V1530M1148 33V895L1493 1112M1148 895L735 1058V995M47 1327L462 1165"/>
<path vector-effect="non-scaling-stroke" d="M630 300C720 370 820 470 880 578"/>
<path vector-effect="non-scaling-stroke" d="M462 1105C300 1115 130 1010 127 850C125 650 370 240 800 237C960 237 1060 300 1095 430"/>
<path vector-effect="non-scaling-stroke" d="M462 1105C320 1115 172 1010 170 850C170 640 440 275 800 265C950 260 1075 330 1100 470C1103 620 960 850 775 1012"/>
<path vector-effect="non-scaling-stroke" d="M462 1105C320 1115 160 1000 160 850C160 640 430 270 800 258C950 258 1070 325 1090 470C1092 600 950 830 765 1010" stroke-width="1.500"/>
<path vector-effect="non-scaling-stroke" d="M1055 593C880 625 720 770 625 985C610 1060 640 1110 680 1135C720 1128 760 1115 782 1093L735 1058V995C850 920 980 790 1055 593"/>
<path vector-effect="non-scaling-stroke" d="M462 1105L495 1122C580 1150 690 1150 780 1095M462 1105V1165L495 1185C560 1225 680 1215 725 1190V1125M495 1122V1185"/>
<path vector-effect="non-scaling-stroke" d="M725 1190C780 1170 800 1130 790 1095C790 1075 790 1050 770 1035"/>
<path vector-effect="non-scaling-stroke" d="M680 1135C610 1100 555 1040 555 960C555 800 760 560 1020 548C1130 548 1205 620 1205 720C1205 880 1000 1130 780 1135"/>
<path vector-effect="non-scaling-stroke" d="M660 1125C700 1170 750 1188 820 1185C1020 1180 1265 950 1265 760C1265 680 1210 620 1150 595C1110 588 1075 588 1055 593"/>
</g>
<path d="M1095 430C1105 510 1085 590 1050 680C1000 790 900 930 770 1012" fill="none" stroke="#4a604b" stroke-width="2.200" vector-effect="non-scaling-stroke"/>
<!-- highlight -->
<ellipse cx="583" cy="557" rx="24" ry="20" fill="url(#spot)"/>
<!-- axes -->
<path d="M600 690L305 803" fill="none" stroke="#25e02a" stroke-width="3" vector-effect="non-scaling-stroke" stroke-dasharray="26 6 10 6"/>
<path d="M632 692L862 835" fill="none" stroke="#d4141a" stroke-width="3" vector-effect="non-scaling-stroke" stroke-dasharray="34 5 10 6"/>
<path d="M617 700V938" fill="none" stroke="#1420c4" stroke-width="3" vector-effect="non-scaling-stroke" stroke-dasharray="34 5 8 6"/>
<ellipse cx="615" cy="682" rx="18" ry="14" fill="#f0f0ec" stroke="#6d7d80" stroke-width="2" vector-effect="non-scaling-stroke"/>
</g>

<!-- view cube -->
<path d="M1797 222L1846 202 1884 228 1835 249z" fill="url(#gc)"/>
<path d="M1797 222L1835 249V298L1803 272z" fill="url(#gd)"/>
<path d="M1835 249L1884 228 1879 275 1836 298z" fill="url(#gd)"/>
<path d="M1797 222L1846 202" stroke="#78d878" stroke-width="2"/><path d="M1846 202L1884 228" stroke="#ec9a9a" stroke-width="2"/>
<path d="M1835 249V298M1835 249L1822 240M1835 249L1860 238M1803 272L1836 298 1879 275M1797 222L1803 272M1884 228L1879 275" fill="none" stroke="#858585" stroke-dasharray="5 4"/>
<path d="M1780 225L1797 222" stroke="#78d878" stroke-width="1.500"/><path d="M1884 228L1893 232" stroke="#ec9a9a" stroke-width="1.500"/>
<text x="1775" y="232" font-size="14" fill="#7fe07f">Y</text>
<text x="1895" y="240" font-size="14" fill="#ef7f7f">X</text>
<text font-size="12" fill="#6e6e6e" transform="translate(1861 229) rotate(210)" textLength="44" lengthAdjust="spacingAndGlyphs">BOTTOM</text>
<text font-size="10" fill="#6e6e6e" transform="translate(1828 268) rotate(225)" textLength="25" lengthAdjust="spacingAndGlyphs">BACK</text>
<text font-size="11" fill="#6e6e6e" transform="translate(1870 250) rotate(143)" textLength="36" lengthAdjust="spacingAndGlyphs">RIGHT</text>

<!-- nav bar -->
<rect x="806" y="933" width="181" height="30" fill="#c9c9c9"/><rect x="995.500" y="933" width="116" height="30" fill="#c9c9c9"/>
<g transform="translate(-2 0)"><path d="M823.500 935V961M819 940L823.500 935 828 940M814 947C820 941 833 942 832 947C831 951 825 953 817 952M820 949L815.500 952.500 820 956" fill="none" stroke="#333" stroke-width="1.400"/></g>
<path d="M837 945H844L840.500 950z" fill="#333"/>
<path d="M852 943H871V960H852zM855 949H868V956H855zM853 942L857 937 866 934 869 942" fill="#e8e8e8" stroke="#444" stroke-width="1.200"/>
<path d="M888 958C884 952 883 948 885 946L888 950V940Q890 938 891 940V937Q893 935 895 937V939Q897 937 899 940V943Q902 942 903 945L901 955 899 959z" fill="#fafafa" stroke="#333" stroke-width="1.100"/>
<circle cx="924" cy="948" r="7" fill="#eef2f6" stroke="#333" stroke-width="1.200"/><path d="M929 953L936 959" stroke="#333" stroke-width="2"/><path d="M931 939H937M934 936V942M931 945H937" stroke="#333" stroke-width="1"/>
<rect x="949" y="935" width="20" height="21" fill="none" stroke="#777" stroke-dasharray="2 2"/><circle cx="958" cy="946" r="9" fill="#eef2f6" stroke="#333" stroke-width="1.300"/><path d="M964 953L970 960" stroke="#333" stroke-width="2"/>
<path d="M975 945H982L978.500 950z" fill="#333"/>
<rect x="1001" y="938" width="19" height="17" fill="#c1d6ea" stroke="#444" stroke-width="1.400"/><path d="M1010 955V959M1004 960.500H1017" stroke="#444" stroke-width="1.500"/>
<path d="M1023 945H1030L1026.500 950z" fill="#333"/>
<rect x="1038.500" y="938" width="20" height="22" fill="#aaa" stroke="#555"/><path d="M1043 938V960M1047 938V960M1051 938V960M1055 938V960M1039 942H1058M1039 946H1058M1039 950H1058M1039 954H1058M1039 958H1058" stroke="#eee" stroke-width=".8"/>
<path d="M1062 945H1069L1065.500 950z" fill="#333"/>
<rect x="1077.500" y="939" width="19" height="19" fill="#94aecb" stroke="#44678f"/><path d="M1087 939V958M1078 948.500H1096" stroke="#d7e3f0" stroke-width="1.600"/>
<path d="M1100 945H1107L1103.500 950z" fill="#333"/>

<!-- warning -->
<path d="M1898 939.500L1908 957H1888z" fill="#f2d92f" stroke="#8c7f1e" stroke-width="1.200"/><path d="M1898 945V951M1898 953V955" stroke="#222" stroke-width="1.800"/>

<!-- timeline -->
<rect x="0" y="968" width="1919.500" height="62" fill="#c9c9c9"/>
<rect x="0" y="1030" width="1921" height="1" fill="#333"/>
<g fill="#5c5c5c"><rect x="13" y="988" width="3.500" height="19"/><path d="M30 988V1007L17 997.500z"/><path d="M60 990V1005L50 997.500z M45 995H50V1000H45z"/><path d="M76 987V1008L92 997.500z"/><path d="M106 995H111V1000H106zM111 990V1005L121 997.500z"/><path d="M138 988V1007L151 997.500z"/><rect x="150.500" y="988" width="3.500" height="19"/></g>
<rect x="193" y="1018.500" width="1379" height="2.500" fill="#6a6a6a"/>
<path stroke="#6a6a6a" stroke-width="1.800" d="M193 1013v6M223 1013v6M253 1013v6M283 1013v6M313 1013v6M343 1013v6M373 1013v6M403 1013v6M433 1013v6M463 1013v6M493 1013v6M523 1013v6M553 1013v6M583 1013v6M613 1013v6M643 1013v6M673 1013v6M703 1013v6M733 1013v6M763 1013v6M793 1013v6M823 1013v6M853 1013v6M883 1013v6M913 1013v6M943 1013v6M973 1013v6M1003 1013v6M1033 1013v6M1063 1013v6M1093 1013v6M1123 1013v6M1153 1013v6M1183 1013v6M1213 1013v6M1243 1013v6M1273 1013v6M1303 1013v6M1333 1013v6M1363 1013v6M1393 1013v6M1423 1013v6M1453 1013v6M1483 1013v6M1513 1013v6M1543 1013v6M1572 1013v6"/>
<rect x="958" y="983" width="270" height="30" rx="2" fill="#ff4a4a"/>
<rect x="1228" y="983" width="60" height="30" fill="#e4e42a"/>

<use href="#tsk" x="182.500" y="988"/><use href="#tpu" x="212.500" y="988"/><use href="#tde" x="242.500" y="988"/><use href="#tsk" x="272.500" y="988"/><use href="#tex" x="302.500" y="988"/><use href="#tsk" x="332.500" y="988"/><use href="#trv" x="362.500" y="988"/><use href="#tsk" x="392.500" y="988"/><use href="#trv" x="422.500" y="988"/><use href="#tsk" x="452.500" y="988"/><use href="#tex" x="482.500" y="988"/><use href="#tex" x="512.500" y="988"/><use href="#tsk" x="542.500" y="988"/>
<use href="#tco" x="572.500" y="988"/><use href="#tco" x="602.500" y="988"/><use href="#tco" x="632.500" y="988"/><use href="#tco" x="662.500" y="988"/><use href="#tco" x="692.500" y="988"/><use href="#tco" x="722.500" y="988"/><use href="#tco" x="752.500" y="988"/><use href="#tco" x="782.500" y="988"/><use href="#tco" x="812.500" y="988"/>
<use href="#tde" x="842.500" y="988"/><use href="#tin" x="872.500" y="988"/><use href="#tsk" x="902.500" y="988"/><use href="#tin" x="932.500" y="988"/>
<g opacity=".22"><use href="#tmv" x="962.500" y="988"/></g>
<use href="#tmv" x="992.500" y="988"/><use href="#tmv" x="1022.500" y="988"/><use href="#tmv" x="1052.500" y="988"/><use href="#tmv" x="1082.500" y="988"/><use href="#tmv" x="1112.500" y="988"/><use href="#tmv" x="1142.500" y="988"/><use href="#tmv" x="1172.500" y="988"/><use href="#tmv" x="1202.500" y="988"/>
<path d="M1234 988H1253V1009H1246V1000Q1246 996 1241 996H1234z" fill="#fbc99a" stroke="#8a5a30"/>
<rect x="1264" y="988" width="19" height="21" fill="#f8cfa8" stroke="#8a5a30"/><path d="M1273.500 988V1009M1270 992H1277M1270 996H1277M1270 1000H1277M1270 1004H1277" stroke="#6a4526"/>
<use href="#tsk" x="1292.500" y="988"/><use href="#tex" x="1322.500" y="988"/><use href="#tex" x="1352.500" y="988"/>
<rect x="1384" y="988" width="8" height="10" rx="3" fill="#f2f2f2" stroke="#555"/><path d="M1386 999V1006H1391" fill="none" stroke="#3c74b8" stroke-width="1.600"/><rect x="1392" y="998" width="11" height="10" rx="2" fill="#eee" stroke="#555"/>
<path d="M1413 996L1420 989H1433V1001L1428 1004H1424V1009H1414z" fill="#7fa6d4" stroke="#3e6ba0"/><path d="M1424 996V1004M1413 996H1424L1433 989" fill="none" stroke="#cfe0f1"/>
<use href="#txb" x="1442" y="988"/><use href="#txb" x="1472" y="988"/><use href="#txb" x="1502" y="988"/>
<use href="#tsk" x="1532.500" y="988"/><use href="#tex" x="1562.500" y="988"/>
<path d="M1580 982H1595V985L1589.500 992H1585.500L1580 985z" fill="#6a6a6a"/><rect x="1586" y="990" width="3" height="31" fill="#6a6a6a"/>
<path d="M1897 988h3l1 3 2.500 1 2.500-1.500 2 2-1.500 2.500 1 2.500 3 1v3l-3 1-1 2.500 1.500 2.500-2 2-2.500-1.500-2.500 1-1 3h-3l-1-3-2.500-1-2.500 1.500-2-2 1.500-2.500-1-2.500-3-1v-3l3-1 1-2.500-1.500-2.500 2-2 2.500 1.500 2.500-1z" fill="#5f5f5f"/><circle cx="1898.500" cy="998" r="3.800" fill="#c9c9c9"/>
</svg>
</body></html>
